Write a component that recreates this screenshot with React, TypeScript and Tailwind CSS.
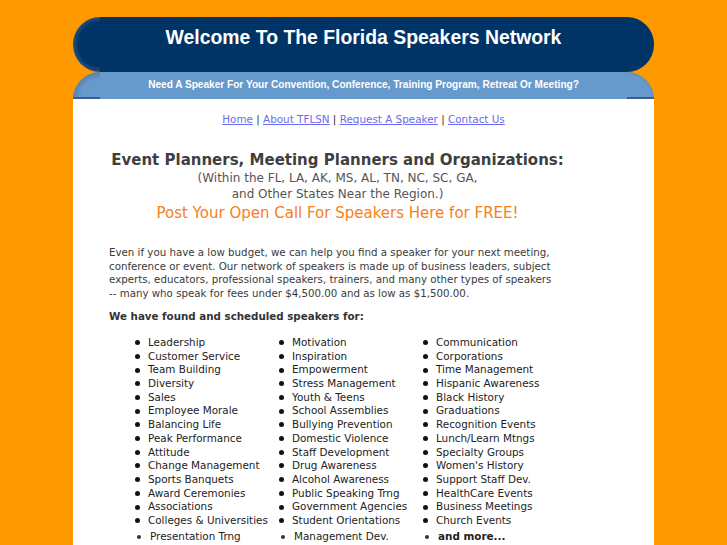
import React from "react";

const col1 = [
  "Leadership",
  "Customer Service",
  "Team Building",
  "Diversity",
  "Sales",
  "Employee Morale",
  "Balancing Life",
  "Peak Performance",
  "Attitude",
  "Change Management",
  "Sports Banquets",
  "Award Ceremonies",
  "Associations",
  "Colleges & Universities",
];
const col2 = [
  "Motivation",
  "Inspiration",
  "Empowerment",
  "Stress Management",
  "Youth & Teens",
  "School Assemblies",
  "Bullying Prevention",
  "Domestic Violence",
  "Staff Development",
  "Drug Awareness",
  "Alcohol Awareness",
  "Public Speaking Trng",
  "Government Agencies",
  "Student Orientations",
];
const col3 = [
  "Communication",
  "Corporations",
  "Time Management",
  "Hispanic Awareness",
  "Black History",
  "Graduations",
  "Recognition Events",
  "Lunch/Learn Mtngs",
  "Specialty Groups",
  "Women's History",
  "Support Staff Dev.",
  "HealthCare Events",
  "Business Meetings",
  "Church Events",
];

function Col({ items }: { items: string[] }) {
  return (
    <ul className="w-[144px]">
      {items.map((t) => (
        <li key={t} className="flex items-center h-[13.7px] whitespace-nowrap">
          <span className="ml-[5px] mr-[8px] w-[5px] h-[5px] rounded-full bg-[#111]" />
          <span>{t}</span>
        </li>
      ))}
    </ul>
  );
}

export default function App() {
  return (
    <div className="min-h-screen w-full bg-[#ff9900] pt-[17px]">
      <div className="mx-auto w-[581px]">
        {/* dark band */}
        <div className="flex h-[55px]">
          <div className="w-[27px] rounded-l-full bg-[radial-gradient(ellipse_at_95%_50%,#003366_55%,#34577f_75%,#98b2cc_100%)]" />
          <div className="flex-1 bg-[#003366] flex justify-center pt-[8px]">
            <span
              className="text-white font-bold text-[19.4px] leading-[24px] whitespace-nowrap"
              style={{ fontFamily: '"Liberation Sans", Arial, sans-serif' }}
            >
              Welcome To The Florida Speakers Network
            </span>
          </div>
          <div className="w-[27px] rounded-r-full bg-[radial-gradient(ellipse_at_0%_50%,#003366_70%,#0b2a52_100%)]" />
        </div>
        {/* light band */}
        <div className="flex h-[27px]">
          <div className="w-[27px] rounded-tl-[27px] bg-[radial-gradient(ellipse_at_100%_100%,#6699cc_50%,#4f78a6_78%,#b4cbe2_100%)] border-b-2 border-[#3d5f85]" />
          <div className="flex-1 bg-[#6699cc] flex justify-center items-center pb-[2px]">
            <span
              className="text-white font-bold text-[10.1px] whitespace-nowrap"
              style={{ fontFamily: '"Liberation Sans", Arial, sans-serif' }}
            >
              Need A Speaker For Your Convention, Conference, Training Program, Retreat Or Meeting?
            </span>
          </div>
          <div className="w-[27px] rounded-tr-[27px] bg-[radial-gradient(ellipse_at_0%_100%,#6699cc_60%,#4a74a2_100%)] border-b-2 border-[#3d5f85]" />
        </div>
        {/* white panel */}
        <div
          className="bg-white h-[460px] text-[#333] overflow-hidden"
          style={{ fontFamily: '"DejaVu Sans", Verdana, sans-serif' }}
        >
          <div className="pt-[13px] text-center text-[10.4px] leading-[14px] text-[#333]">
            <a className="underline text-[#6b6bf0]">Home</a> |{" "}
            <a className="underline text-[#6b6bf0]">About TFLSN</a> |{" "}
            <a className="underline text-[#6b6bf0]">Request A Speaker</a> |{" "}
            <a className="underline text-[#6b6bf0]">Contact Us</a>
          </div>

          <div className="mt-[25px] ml-[36px] w-[457px] text-center whitespace-nowrap">
            <div className="font-bold text-[15px] leading-[18px] text-[#3f3f3f]">
              Event Planners, Meeting Planners and Organizations:
            </div>
            <div className="pt-[1px] text-[12px] leading-[16px] text-[#555]">
              (Within the FL, LA, AK, MS, AL, TN, NC, SC, GA,
            </div>
            <div className="text-[12px] leading-[16px] text-[#555]">
              and Other States Near the Region.)
            </div>
            <div className="pt-[1px] text-[15px] leading-[21px] text-[#f7801a]">
              Post Your Open Call For Speakers Here for FREE!
            </div>
          </div>

          <div className="mt-[22px] pl-[36px] text-[10.25px] leading-[13.6px] text-[#3a3a3a] whitespace-nowrap">
            <p>
              Even if you have a low budget, we can help you find a speaker for your next meeting,
              <br />
              conference or event. Our network of speakers is made up of business leaders, subject
              <br />
              experts, educators, professional speakers, trainers, and many other types of speakers
              <br />
              -- many who speak for fees under $4,500.00 and as low as $1,500.00.
            </p>
            <p className="mt-[9.6px] font-bold text-[10.3px] leading-[13.6px] text-[#333]">
              We have found and scheduled speakers for:
            </p>
          </div>

          <div className="mt-[12.4px] pl-[57px] text-[10.4px] text-[#222]">
            <div className="flex">
              <Col items={col1} />
              <Col items={col2} />
              <Col items={col3} />
            </div>
            <div className="flex mt-[2.5px] h-[14px] items-center">
              <div className="w-[144px] flex items-center">
                <span className="ml-[7px] mr-[9px] w-[4px] h-[4px] rounded-full bg-[#333]" />
                <span>Presentation Trng</span>
              </div>
              <div className="w-[144px] flex items-center">
                <span className="ml-[7px] mr-[9px] w-[4px] h-[4px] rounded-full bg-[#333]" />
                <span>Management Dev.</span>
              </div>
              <div className="w-[144px] flex items-center">
                <span className="ml-[7px] mr-[9px] w-[4px] h-[4px] rounded-full bg-[#333]" />
                <span className="font-bold">and more...</span>
              </div>
            </div>
          </div>
        </div>
      </div>
    </div>
  );
}
